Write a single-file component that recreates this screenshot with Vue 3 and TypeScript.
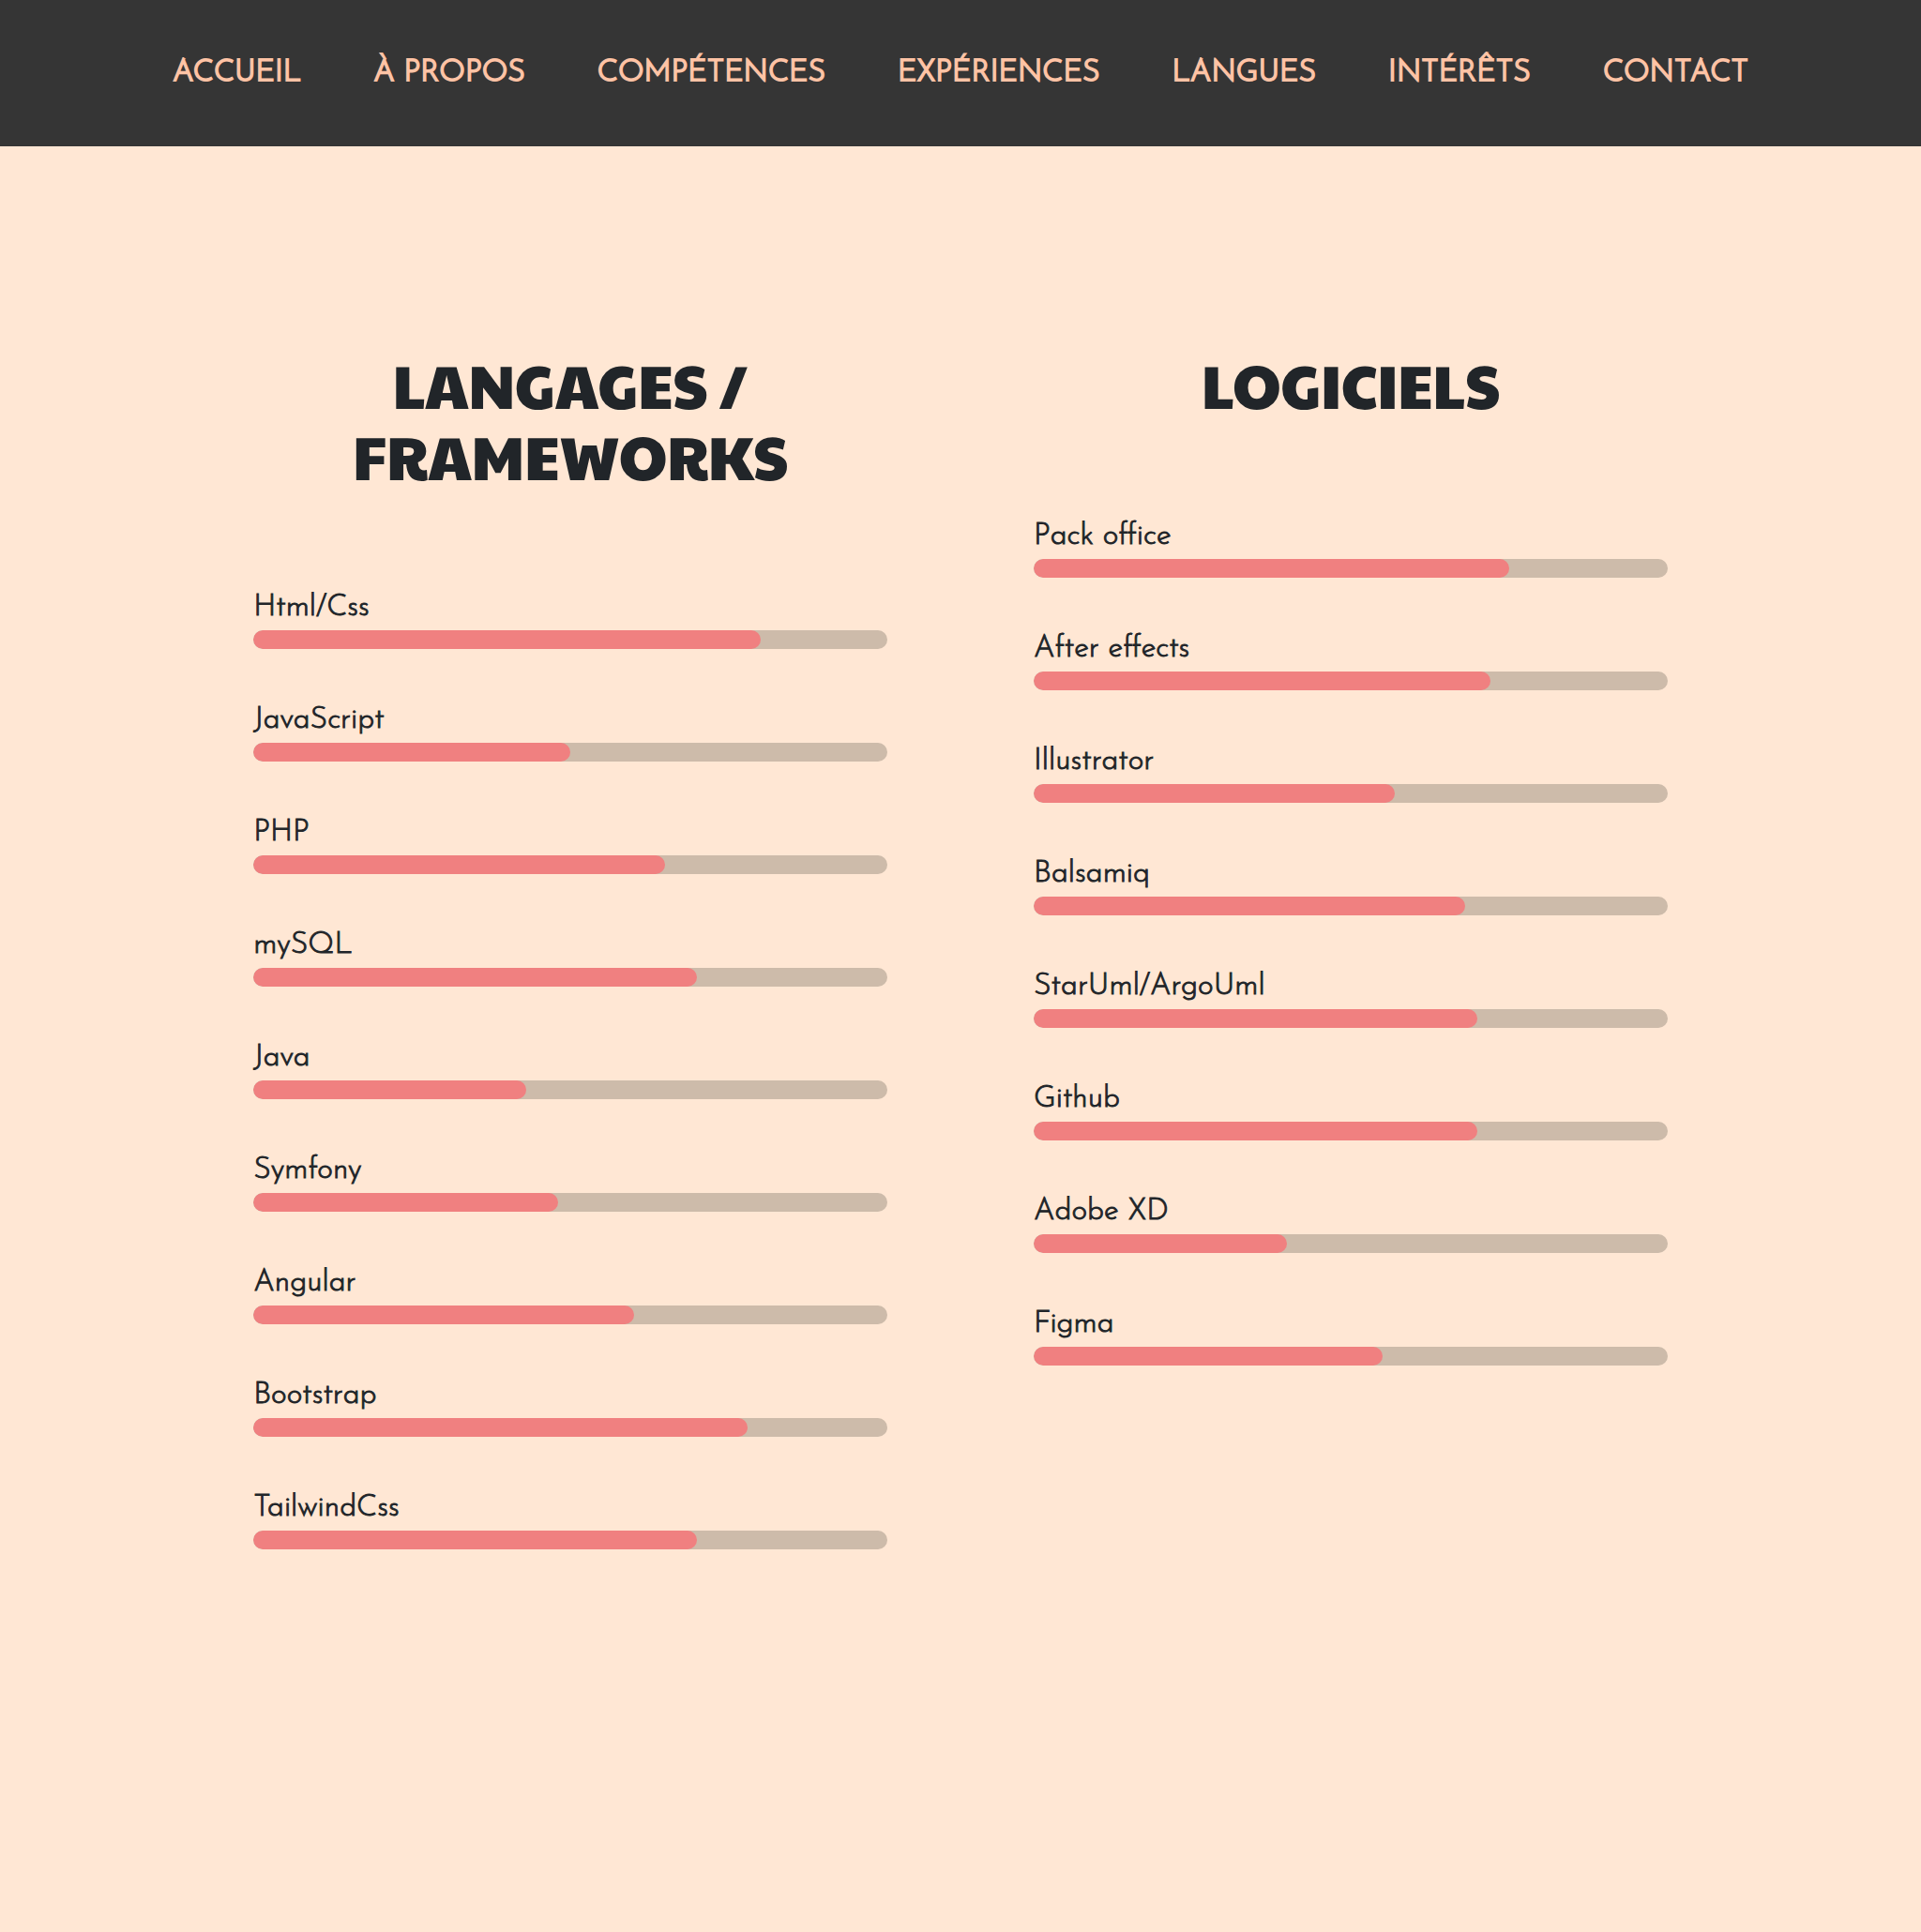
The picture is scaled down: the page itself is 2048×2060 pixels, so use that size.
<script setup lang="ts">
interface NavItem {
  label: string
  target: string
}

interface Skill {
  name: string
  level: number
}

interface SkillGroup {
  title: string
  skills: Skill[]
}

const navItems: NavItem[] = [
  { label: 'ACCUEIL', target: '#accueil' },
  { label: 'À PROPOS', target: '#a-propos' },
  { label: 'COMPÉTENCES', target: '#competences' },
  { label: 'EXPÉRIENCES', target: '#experiences' },
  { label: 'LANGUES', target: '#langues' },
  { label: 'INTÉRÊTS', target: '#interets' },
  { label: 'CONTACT', target: '#contact' },
]

const groups: SkillGroup[] = [
  {
    title: 'LANGAGES / FRAMEWORKS',
    skills: [
      { name: 'Html/Css', level: 80 },
      { name: 'JavaScript', level: 50 },
      { name: 'PHP', level: 65 },
      { name: 'mySQL', level: 70 },
      { name: 'Java', level: 43 },
      { name: 'Symfony', level: 48 },
      { name: 'Angular', level: 60 },
      { name: 'Bootstrap', level: 78 },
      { name: 'TailwindCss', level: 70 },
    ],
  },
  {
    title: 'LOGICIELS',
    skills: [
      { name: 'Pack office', level: 75 },
      { name: 'After effects', level: 72 },
      { name: 'Illustrator', level: 57 },
      { name: 'Balsamiq', level: 68 },
      { name: 'StarUml/ArgoUml', level: 70 },
      { name: 'Github', level: 70 },
      { name: 'Adobe XD', level: 40 },
      { name: 'Figma', level: 55 },
    ],
  },
]
</script>

<template>
  <div class="page">
    <header class="site-header">
      <nav class="nav">
        <a v-for="item in navItems" :key="item.target" class="nav-link" :href="item.target">{{ item.label }}</a>
      </nav>
    </header>

    <main id="competences" class="skills">
      <section v-for="group in groups" :key="group.title" class="group">
        <h2 class="group-title">{{ group.title }}</h2>
        <ul class="skill-list">
          <li v-for="skill in group.skills" :key="skill.name" class="skill">
            <span class="skill-name">{{ skill.name }}</span>
            <div
              class="track"
              role="progressbar"
              :aria-label="skill.name"
              :aria-valuenow="skill.level"
              aria-valuemin="0"
              aria-valuemax="100"
            >
              <div class="fill" :style="{ width: skill.level + '%' }"></div>
            </div>
          </li>
        </ul>
      </section>
    </main>
  </div>
</template>

<style>
body {
  margin: 0;
  background: #ffe7d4;
}
</style>

<style scoped>
.page {
  min-height: 100vh;
  background: #ffe7d4;
  color: #212529;
  font-family: 'Josefin Sans', Lato, sans-serif;
  font-weight: 300;
}

.site-header {
  background: #353535;
}

.nav {
  display: flex;
  flex-wrap: wrap;
  justify-content: center;
  gap: 16px 77px;
  padding: 54px 32px;
}

.nav-link {
  color: #ffc3a5;
  font-size: 32px;
  line-height: 48px;
  text-decoration: none;
  -webkit-text-stroke: 2px #ffc3a5;
}

.skills {
  display: flex;
  justify-content: center;
  gap: 156px;
  padding: 215px 32px 160px;
}

.group {
  flex: none;
  width: 33vw;
}

.group-title {
  margin: 0 0 101px;
  font-family: 'Paytone One', Lato, sans-serif;
  font-size: 65px;
  font-weight: 400;
  line-height: 76px;
  text-align: center;
}

.skill-list {
  display: flex;
  flex-direction: column;
  gap: 52px;
  margin: 0;
  padding: 0;
  list-style: none;
}

.skill-name {
  display: block;
  font-size: 32px;
  line-height: 48px;
  -webkit-text-stroke: 1px #212529;
}

.track {
  height: 20px;
  border-radius: 10px;
  background: #cdbbaa;
  overflow: hidden;
}

.fill {
  height: 100%;
  border-radius: 10px;
  background: #f08080;
}
</style>
